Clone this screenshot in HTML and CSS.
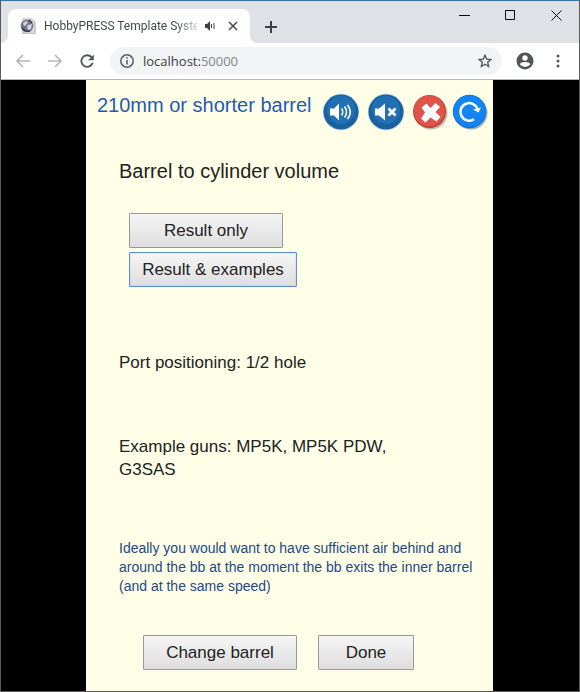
FILE: index.html
```html
<!DOCTYPE html>
<html lang="en">
<head>
<meta charset="utf-8">
<meta name="viewport" content="width=device-width, initial-scale=1">
<title>HobbyPRESS Template System</title>
<link rel="stylesheet" href="styles.css">
</head>
<body>
<div class="window">
  <header class="tabstrip">
    <div class="tab">
      <svg class="favicon" width="16" height="16" viewBox="0 0 16 16" aria-hidden="true">
        <path d="M3 1h8l4 3v12H3z" fill="#dcdce2" stroke="#a9a9b3"/>
        <circle cx="7" cy="8" r="6.3" fill="#70748c"/>
        <path d="M3 5l3-2 2 1-2 3-2 1zM8 7l4-1-1 5-3 1-1-3z" fill="#d2d4e2"/>
        <path d="M2 10q3 4 8 3M9 2l3 3" stroke="#343950" stroke-width="1.4" fill="none"/>
      </svg>
      <span class="tab-title">HobbyPRESS Template Syste</span>
      <svg width="11" height="10" viewBox="0 0 11 10" aria-hidden="true">
        <path d="M0 3h2l3-3v10l-3-3H0z" fill="#3c4043"/>
        <path d="M6.500 3v4M9 2v6" stroke="#3c4043" fill="none"/>
      </svg>
      <button class="plain tab-close" aria-label="Close tab">
        <svg width="10" height="10" viewBox="0 0 10 10"><path d="M1 1l8 8M9 1L1 9" stroke="#45494d" stroke-width="1.500"/></svg>
      </button>
    </div>
    <button class="plain new-tab" aria-label="New tab">
      <svg width="12" height="12" viewBox="0 0 12 12"><path d="M6 0v12M0 6h12" stroke="#3c4043" stroke-width="2"/></svg>
    </button>
    <div class="window-controls">
      <button class="plain" aria-label="Minimize"><svg width="11" height="11" viewBox="0 0 11 11"><path d="M0 5.500h11" stroke="#000"/></svg></button>
      <button class="plain" aria-label="Maximize"><svg width="11" height="11" viewBox="0 0 11 11"><path d="M.5 .5h9v9h-9z" stroke="#000" fill="none"/></svg></button>
      <button class="plain" aria-label="Close"><svg width="11" height="11" viewBox="0 0 11 11"><path d="M.5 .5l10 10M10.500 .5l-10 10" stroke="#000"/></svg></button>
    </div>
  </header>

  <nav class="toolbar" aria-label="Browser">
    <button class="plain" aria-label="Back"><svg width="14" height="14" viewBox="0 0 14 14" fill="none" stroke="#b4b6b9" stroke-width="1.600"><path d="M14 7H1M7 1L1 7l6 6"/></svg></button>
    <button class="plain" aria-label="Forward"><svg width="14" height="14" viewBox="0 0 14 14" fill="none" stroke="#b4b6b9" stroke-width="1.600"><path d="M0 7h13M7 1l6 6-6 6"/></svg></button>
    <button class="plain" aria-label="Reload"><svg width="14" height="14" viewBox="0 0 14 14"><path d="M11.500 3.200A5.800 5.800 0 1 0 12.700 8.800" fill="none" stroke="#55595d" stroke-width="1.900"/><path d="M13.800 .5v5.700H8z" fill="#55595d"/></svg></button>
    <div class="address">
      <svg width="14" height="14" viewBox="0 0 14 14" aria-hidden="true"><circle cx="7" cy="7" r="6.200" fill="none" stroke="#5a5e62" stroke-width="1.500"/><path d="M7 6v4.500M7 3.200v1.600" stroke="#5a5e62" stroke-width="1.600"/></svg>
      <span class="url">localhost:<span class="port">50000</span></span>
      <button class="plain" aria-label="Bookmark"><svg width="14" height="14" viewBox="0 0 14 14"><path d="M7 1.300l1.700 3.800 4.200.4-3.200 2.800 1 4.200L7 10.300l-3.700 2.200 1-4.200L1.100 5.500l4.200-.4z" fill="none" stroke="#4d5155" stroke-width="1.300"/></svg></button>
    </div>
    <button class="plain profile" aria-label="Profile"><svg width="18" height="18" viewBox="0 0 18 18"><circle cx="9" cy="9" r="8.500" fill="#515458"/><circle cx="9" cy="6" r="2.700" fill="#fff"/><path d="M3.700 12.300Q5 10 9 10t5.300 2.300Q12.500 15 9 15t-5.300-2.700z" fill="#fff"/></svg></button>
    <button class="plain menu" aria-label="Menu"><svg width="4" height="14" viewBox="0 0 4 14" fill="#515458"><circle cx="2" cy="2" r="1.500"/><circle cx="2" cy="7" r="1.500"/><circle cx="2" cy="12" r="1.500"/></svg></button>
  </nav>

  <main class="viewport">
    <article class="page">
      <div class="page-head">
        <h1>210mm or shorter barrel</h1>
        <div class="actions">
          <button class="plain" aria-label="Sound on"><svg width="38" height="38" viewBox="0 0 38 38">
            <circle cx="19" cy="19" r="18.300" fill="#c3d8e2"/><circle cx="19" cy="19" r="17.500" fill="#1b61a0"/><circle cx="19" cy="17" r="14" fill="#2070b3"/>
            <path d="M8 15.500h4l5-5v17l-5-5H8z" fill="#fff"/><path d="M19.500 15.500q2.500 3.500 0 7M22.500 13.500q4 5.500 0 11M25.500 12q5.500 7 0 14" fill="none" stroke="#fff" stroke-width="1.600"/></svg></button>
          <button class="plain" aria-label="Mute"><svg width="38" height="38" viewBox="0 0 38 38">
            <circle cx="19" cy="19" r="18.300" fill="#c3d8e2"/><circle cx="19" cy="19" r="17.500" fill="#1b61a0"/><circle cx="19" cy="17" r="14" fill="#2070b3"/>
            <path d="M8 15.500h4l6-5v17l-6-5H8z" fill="#fff"/><path d="M21.500 15.500l7 7M28.500 15.500l-7 7" stroke="#fff" stroke-width="2.700"/></svg></button>
          <button class="plain" aria-label="Exit"><svg width="36" height="36" viewBox="0 0 36 36">
            <circle cx="19" cy="19" r="16.500" fill="#928b80" opacity=".6"/><circle cx="17.500" cy="17.500" r="16.500" fill="#c23c34"/><circle cx="17.300" cy="17" r="15.500" fill="#e0524a"/>
            <path d="M9.500 13.500l5-4 4 4.500 5-5 4.500 4-4.500 5 5 5-4 4.500-6-4-5 5-4.500-4 4-6z" fill="#fff"/></svg></button>
          <button class="plain" aria-label="Restart"><svg width="36" height="36" viewBox="0 0 36 36">
            <circle cx="19" cy="19" r="16.500" fill="#79899a" opacity=".7"/><circle cx="17.500" cy="17.500" r="16.700" fill="#0d74d8"/><circle cx="17.300" cy="17" r="15.800" fill="#1284f4"/>
            <path d="M22 25.300A8.800 8.800 0 1 1 25.700 15.500" fill="none" stroke="#fff" stroke-width="2.500"/><path d="M21 15.500l8-2-2.500 5z" fill="#fff"/></svg></button>
        </div>
      </div>

      <h2>Barrel to cylinder volume</h2>
      <div class="results">
        <button class="btn btn-medium">Result only</button>
        <button class="btn btn-wide focused">Result &amp; examples</button>
      </div>
      <p class="fact port-position">Port positioning: 1/2 hole</p>
      <p class="fact guns">Example guns: MP5K, MP5K PDW, G3SAS</p>
      <p class="note">Ideally you would want to have sufficient air behind and around the bb at the moment the bb exits the inner barrel (and at the same speed)</p>
      <div class="footer">
        <button class="btn btn-medium">Change barrel</button>
        <button class="btn btn-small">Done</button>
      </div>
    </article>
  </main>
</div>
</body>
</html>
```
FILE: styles.css
```css
* { box-sizing: border-box; }
body { margin: 0; font-family: "Liberation Sans", Arial, sans-serif; }
h1, h2, p { margin: 0; font-weight: 400; }
svg { display: block; }

.window {
  display: flex;
  flex-direction: column;
  min-height: 100vh;
  border: 1px solid #5a5a5a;
  border-top-color: #35749f;
}

.plain {
  display: block;
  padding: 0;
  border: 0;
  background: none;
}

/* Tab strip */
.tabstrip {
  display: flex;
  align-items: flex-end;
  height: 42px;
  padding-left: 7px;
  background: #dee1e6;
}
.tab {
  position: relative;
  display: flex;
  align-items: center;
  width: 242px;
  height: 34px;
  padding: 0 12px;
  border-radius: 8px 8px 0 0;
  background: #fff;
}
/* Flared feet that join the tab to the toolbar */
.tab::before,
.tab::after {
  content: "";
  position: absolute;
  bottom: 0;
  width: 8px;
  height: 8px;
}
.tab::before { right: 100%; background: radial-gradient(circle at 0 0, transparent 8px, #fff 8px); }
.tab::after { left: 100%; background: radial-gradient(circle at 100% 0, transparent 8px, #fff 8px); }
.favicon { flex: none; }
.tab-title {
  flex: 1;
  min-width: 0;
  margin: 0 8px;
  white-space: nowrap;
  font: 12px Roboto, sans-serif;
  color: #45494d;
  -webkit-mask-image: linear-gradient(90deg, #000 86%, transparent 104%);
  mask-image: linear-gradient(90deg, #000 86%, transparent 104%);
}
.tab-close { margin-left: 12px; }
.new-tab { margin: 0 0 10px 15px; }
.window-controls {
  display: flex;
  align-self: flex-start;
  margin-left: auto;
}
.window-controls .plain {
  display: grid;
  place-items: center;
  width: 46px;
  height: 29px;
}

/* Toolbar */
.toolbar {
  display: flex;
  align-items: center;
  height: 37px;
  padding: 0 19px 0 15px;
  border-bottom: 1px solid #b5b7ba;
  background: #fff;
}
.toolbar > .plain + .plain { margin-left: 18px; }
.address {
  display: flex;
  flex: 1;
  align-items: center;
  gap: 9px;
  height: 28px;
  margin-left: 16px;
  padding: 0 10px;
  border-radius: 14px;
  background: #f1f3f4;
}
.url { flex: 1; font: 13px "Open Sans", sans-serif; color: #3c4043; }
.port { color: #80868b; }
.profile { margin-left: 14px; }
.toolbar > .menu.plain { margin-left: 22px; }

/* Page */
.viewport {
  display: flex;
  flex: 1;
  justify-content: center;
  padding: 0 86px 0 85px;
  background: #000;
}
.page {
  flex: 1;
  max-width: 407px;
  padding: 13px 5px 20px 33px;
  background: #ffffe8;
  color: #222;
}
.page-head {
  display: flex;
  justify-content: space-between;
  margin-left: -22px;
}
h1 { color: #1f5baf; font-size: 20px; line-height: 24px; }
.actions { display: flex; align-items: center; gap: 4px; }
.actions .plain:nth-child(-n+2) { margin-right: 3px; }
h2 { margin-top: 28px; font-size: 20px; line-height: 24px; }
.results {
  display: flex;
  flex-direction: column;
  align-items: flex-start;
  gap: 4px;
  margin: 30px 0 0 10px;
}
.btn {
  height: 35px;
  padding: 0;
  border: 1px solid #999;
  border-radius: 1px;
  background: linear-gradient(#f5f5f5, #dedede);
  color: #222;
  font: 17px "Liberation Sans", Arial, sans-serif;
}
.btn-small { width: 96px; }
.btn-medium { width: 154px; }
.btn-wide { width: 168px; }
.focused { border-color: #5b90ce; box-shadow: inset 0 0 1px #5b90ce; }
.fact { max-width: 290px; font-size: 17px; line-height: 23px; }
.port-position { margin-top: 64px; }
.guns { margin-top: 61px; }
.note {
  max-width: 360px;
  margin-top: 58px;
  color: #234884;
  font-size: 14px;
  line-height: 19px;
}
.footer { display: flex; gap: 21px; margin: 39px 0 0 24px; }
```
